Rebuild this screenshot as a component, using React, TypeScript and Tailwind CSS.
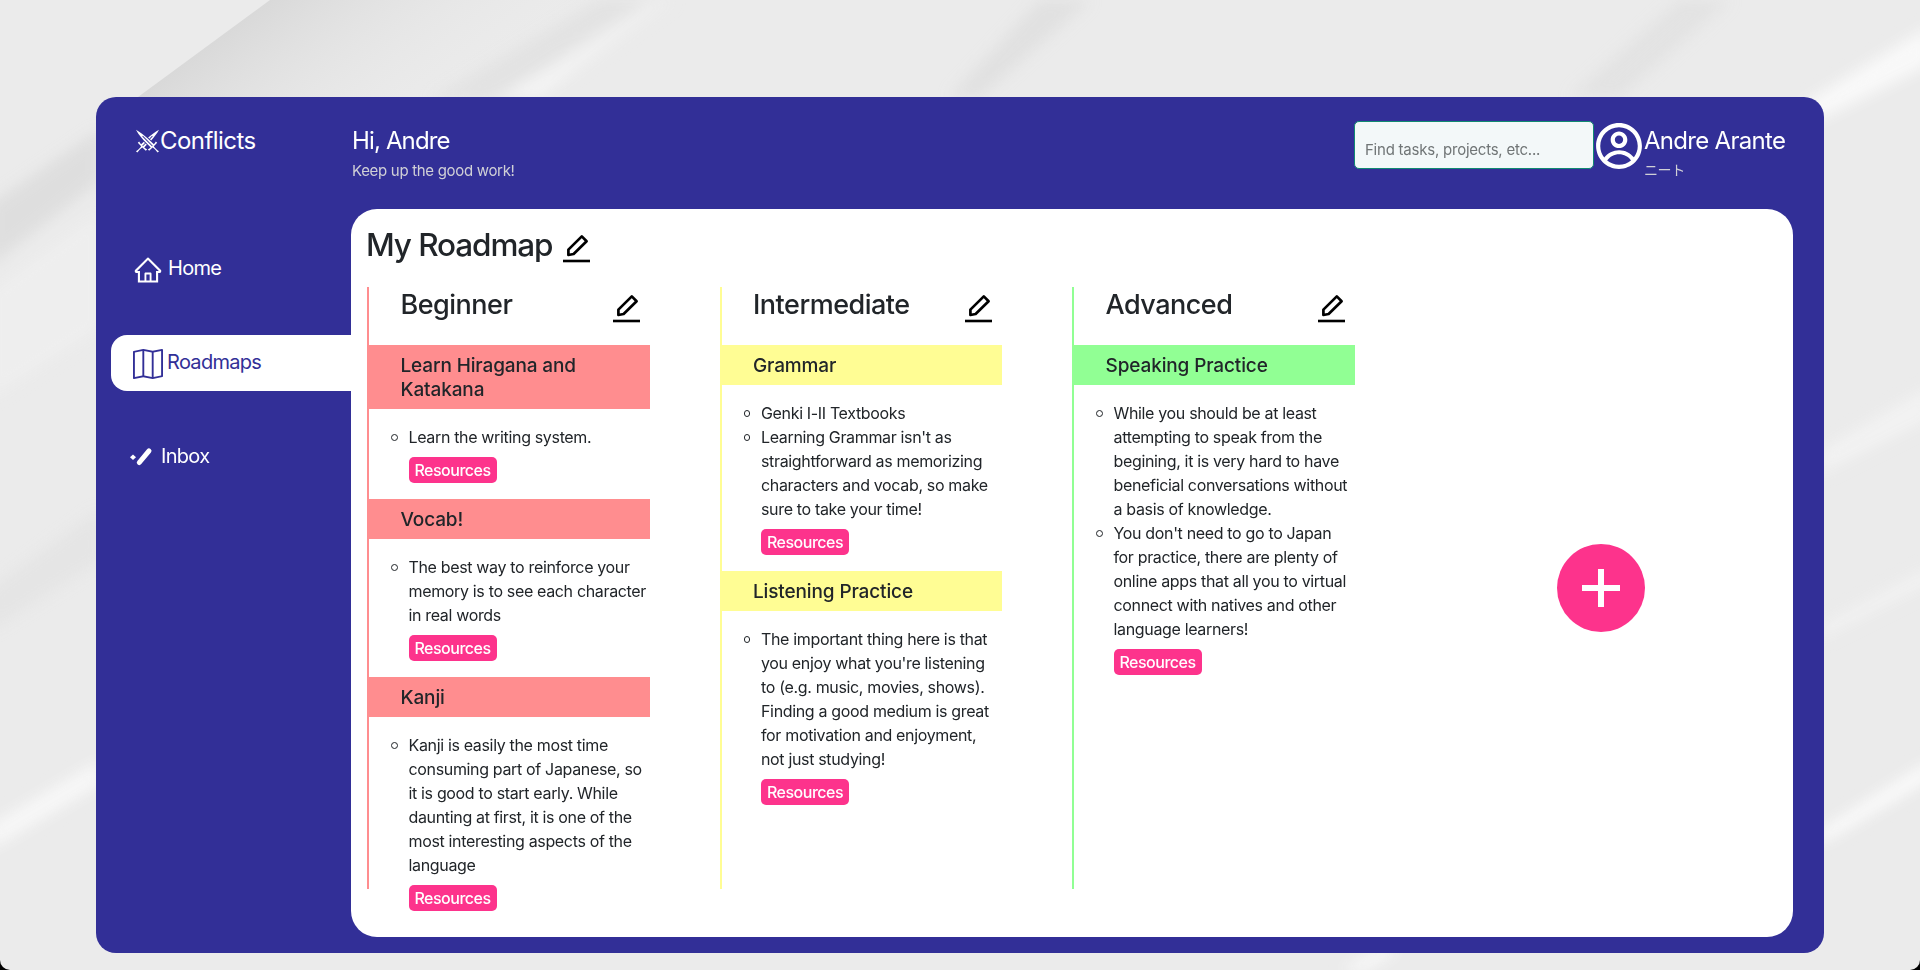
import { GiCrossedSwords } from "react-icons/gi";
import { AiOutlineHome } from "react-icons/ai";
import { BsMap } from "react-icons/bs";
import { CgProfile } from "react-icons/cg";

type Topic = { title: string; items: string[][] };
type Stage = { title: string; border: string; fill: string; topics: Topic[] };

const stages: Stage[] = [
  {
    title: "Beginner",
    border: "border-[#ff8d8f]",
    fill: "bg-[#ff8d8f]",
    topics: [
      { title: "Learn Hiragana and Katakana", items: [["Learn the writing system."]] },
      { title: "Vocab!", items: [["The best way to reinforce your", "memory is to see each character", "in real words"]] },
      {
        title: "Kanji",
        items: [["Kanji is easily the most time", "consuming part of Japanese, so", "it is good to start early. While", "daunting at first, it is one of the", "most interesting aspects of the", "language"]],
      },
    ],
  },
  {
    title: "Intermediate",
    border: "border-[#fffd94]",
    fill: "bg-[#fffd94]",
    topics: [
      {
        title: "Grammar",
        items: [["Genki I-II Textbooks"], ["Learning Grammar isn't as", "straightforward as memorizing", "characters and vocab, so make", "sure to take your time!"]],
      },
      {
        title: "Listening Practice",
        items: [["The important thing here is that", "you enjoy what you're listening", "to (e.g. music, movies, shows).", "Finding a good medium is great", "for motivation and enjoyment,", "not just studying!"]],
      },
    ],
  },
  {
    title: "Advanced",
    border: "border-[#91ff94]",
    fill: "bg-[#91ff94]",
    topics: [
      {
        title: "Speaking Practice",
        items: [
          ["While you should be at least", "attempting to speak from the", "begining, it is very hard to have", "beneficial conversations without", "a basis of knowledge."],
          ["You don't need to go to Japan", "for practice, there are plenty of", "online apps that all you to virtual", "connect with natives and other", "language learners!"],
        ],
      },
    ],
  },
];

function EditIcon() {
  return (
    <svg viewBox="0 0 27 32" className="h-8 w-[27px] shrink-0" fill="none" stroke="#000">
      <path d="M5.4 24 L5.4 18.6 L18.8 5.4 L23.6 10.2 L10.6 23 Z" strokeWidth="2.7" strokeLinejoin="round" />
      <path d="M0 30 H27" strokeWidth="2.6" />
    </svg>
  );
}

function BrushIcon() {
  return (
    <svg viewBox="0 0 24 20" className="h-5 w-6" fill="#fff">
      <path d="M9.3 15.5 L19 3.8" stroke="#fff" strokeWidth="5" strokeLinecap="round" />
      <path d="M3 7.4 L6 10.2 L3 13 L0 10.2 Z" />
    </svg>
  );
}

function Backdrop() {
  return (
    <svg className="absolute inset-0 h-full w-full" viewBox="0 0 1920 970" preserveAspectRatio="none">
      <defs>
        <linearGradient id="dark" gradientUnits="userSpaceOnUse" x1="205" y1="48" x2="330" y2="215">
          <stop offset="0" stopColor="#d9d9d9" />
          <stop offset="1" stopColor="#ebebeb" stopOpacity="0" />
        </linearGradient>
        <linearGradient id="light" x1="0" y1="0" x2="0.6" y2="1">
          <stop offset="0" stopColor="#ebebeb" stopOpacity="0" />
          <stop offset="1" stopColor="#fafafa" />
        </linearGradient>
        <filter id="soft">
          <feGaussianBlur stdDeviation="7" />
        </filter>
      </defs>
      <rect width="1920" height="970" fill="#ebebeb" />
      <path d="M270 0 H600 L470 97 H138 Z" fill="url(#dark)" />
      <g filter="url(#soft)">
        <path d="M560 60 L640 0 H675 L540 97 H500 Z" fill="url(#light)" />
        <path d="M600 0 H650 L490 100 H430 Z" fill="#dedede" opacity="0.6" />
        <path d="M-10 205 L100 130 V180 L-10 265 Z" fill="#d9d9d9" opacity="0.7" />
        <path d="M-10 290 L100 210 V330 L-10 400 Z" fill="#f2f2f2" opacity="0.5" />
        <path d="M-10 590 L100 510 V560 L-10 630 Z" fill="#e3e3e3" opacity="0.8" />
        <path d="M-10 825 L100 760 V785 L-10 850 Z" fill="#fafafa" opacity="0.8" />
        <path d="M1040 0 H1090 L980 97 H950 Z" fill="#dddddd" opacity="0.7" />
        <path d="M1680 0 H1730 L1620 97 H1570 Z" fill="#e0e0e0" opacity="0.7" />
        <path d="M1800 105 L1930 25 V65 L1820 120 Z" fill="#fafafa" opacity="0.9" />
        <path d="M1820 450 L1930 385 V420 L1820 475 Z" fill="#f5f5f5" opacity="0.7" />
        <path d="M1820 625 L1930 565 V585 L1820 640 Z" fill="#f3f3f3" opacity="0.7" />
        <path d="M1820 830 L1930 760 V780 L1820 845 Z" fill="#fafafa" />
        <path d="M1340 970 L1380 950 H1400 L1365 970 Z" fill="#fafafa" />
      </g>
    </svg>
  );
}

function StageColumn({ stage }: { stage: Stage }) {
  return (
    <section className={`h-[602px] w-[282.5px] shrink-0 border-l-2 ${stage.border}`}>
      <header className="flex h-[58px] justify-between pr-2.5 pl-[31.5px]">
        <h2 className="pt-px text-[27px] leading-[34px] font-medium tracking-[-0.5px]">{stage.title}</h2>
        <div className="pt-1">
          <EditIcon />
        </div>
      </header>
      {stage.topics.map((topic) => (
        <div key={topic.title}>
          <h3 className={`pt-[9px] pr-12 pb-[7px] pl-[31.5px] text-[19px] leading-6 font-medium tracking-[-0.13px] ${stage.fill}`}>{topic.title}</h3>
          <ul className="pt-4 pb-4 pl-[39.5px] text-[16px] leading-6 tracking-[-0.34px]">
            {topic.items.map((lines) => (
              <li key={lines[0]} className="relative">
                <span className="absolute top-[9px] -left-[17.5px] size-[6.5px] rounded-full border border-[#212529]" />
                {lines.map((line) => (
                  <span key={line} className="block whitespace-nowrap">
                    {line}
                  </span>
                ))}
              </li>
            ))}
            <li className="mt-2">
              <button className="block h-[26px] w-[88px] rounded-[5px] bg-[#fd338c] text-[16px] leading-[26px] font-medium tracking-[-0.5px] text-white">Resources</button>
            </li>
          </ul>
        </div>
      ))}
    </section>
  );
}

export default function App() {
  return (
    <div className="relative h-[970px] w-full overflow-hidden bg-black font-['Inter','Noto_Sans_CJK_JP',sans-serif] text-[#212529]">
      <div className="relative h-full overflow-hidden rounded-b-[10px] px-24 pt-[97px]">
        <Backdrop />
        <div className="relative flex h-[856px] rounded-[20px] bg-[#322f97] text-white">
          <aside className="w-[255px] shrink-0">
            <div className="flex h-[58px] items-end pl-[39px]">
              <GiCrossedSwords className="mb-px size-[25px]" />
              <span className="text-[24px] leading-[29px] tracking-[-0.55px]">Conflicts</span>
            </div>
            <nav className="pt-[86px] pl-[15px] text-[20px] tracking-[-0.7px]">
              <a className="flex h-14 items-center gap-[5px] pl-[22px]">
                <AiOutlineHome className="mt-0.5 size-[30px]" />
                <span className="-mt-0.5">Home</span>
              </a>
              <a className="mt-[38px] flex h-14 items-center gap-1 rounded-l-2xl bg-white pl-[22px] text-[#322f97]">
                <BsMap className="mt-0.5 size-[30px]" />
                <span className="-mt-0.5">Roadmaps</span>
              </a>
              <a className="mt-[38px] flex h-14 items-center gap-[7px] pl-[19px]">
                <BrushIcon />
                <span className="-mt-0.5">Inbox</span>
              </a>
            </nav>
          </aside>
          <div className="flex flex-1 flex-col">
            <header className="flex h-28 justify-between pr-[39px]">
              <div className="pt-[29px] pl-px">
                <h1 className="text-[24px] leading-[29px] tracking-[-0.85px]">Hi, Andre</h1>
                <p className="mt-1 text-[15px] leading-6 tracking-[-0.31px] text-[#d0d0d6]">Keep up the good work!</p>
              </div>
              <div className="flex">
                <input
                  className="mt-6 h-12 w-60 rounded-[5px] border border-[#118a72] bg-[#f3f8f9] px-2.5 pt-2 text-[15px] tracking-[-0.23px] text-[#555] placeholder:text-[#707576]"
                  placeholder="Find tasks, projects, etc..."
                />
                <CgProfile className="mt-6 size-[50px]" />
                <div className="w-[141px] pt-[29px] whitespace-nowrap">
                  <div className="text-[24px] leading-[29px] tracking-[-0.7px]">Andre Arante</div>
                  <div className="mt-[3px] text-[14px] leading-6 tracking-[-0.4px] text-[#d0d0d6]">ニート</div>
                </div>
              </div>
            </header>
            <main className="mr-[31px] h-[728px] rounded-[26px] bg-white pt-4 pl-4 text-[#212529]">
              <div className="flex h-[62px] gap-2.5">
                <h1 className="-ml-px w-[187px] text-[31.5px] leading-10 font-medium tracking-[-1.1px] whitespace-nowrap">My Roadmap</h1>
                <div className="pt-1.5">
                  <EditIcon />
                </div>
              </div>
              <div className="flex gap-[70px]">
                {stages.map((stage) => (
                  <StageColumn key={stage.title} stage={stage} />
                ))}
                <button className="mt-[257px] ml-[132.5px] flex size-[88px] shrink-0 items-center justify-center rounded-full bg-[#fd338c]">
                  <svg viewBox="0 0 38 38" className="size-[38px]" stroke="#fff" strokeWidth="6">
                    <path d="M19 0 V38 M0 19 H38" />
                  </svg>
                </button>
              </div>
            </main>
          </div>
        </div>
      </div>
    </div>
  );
}
